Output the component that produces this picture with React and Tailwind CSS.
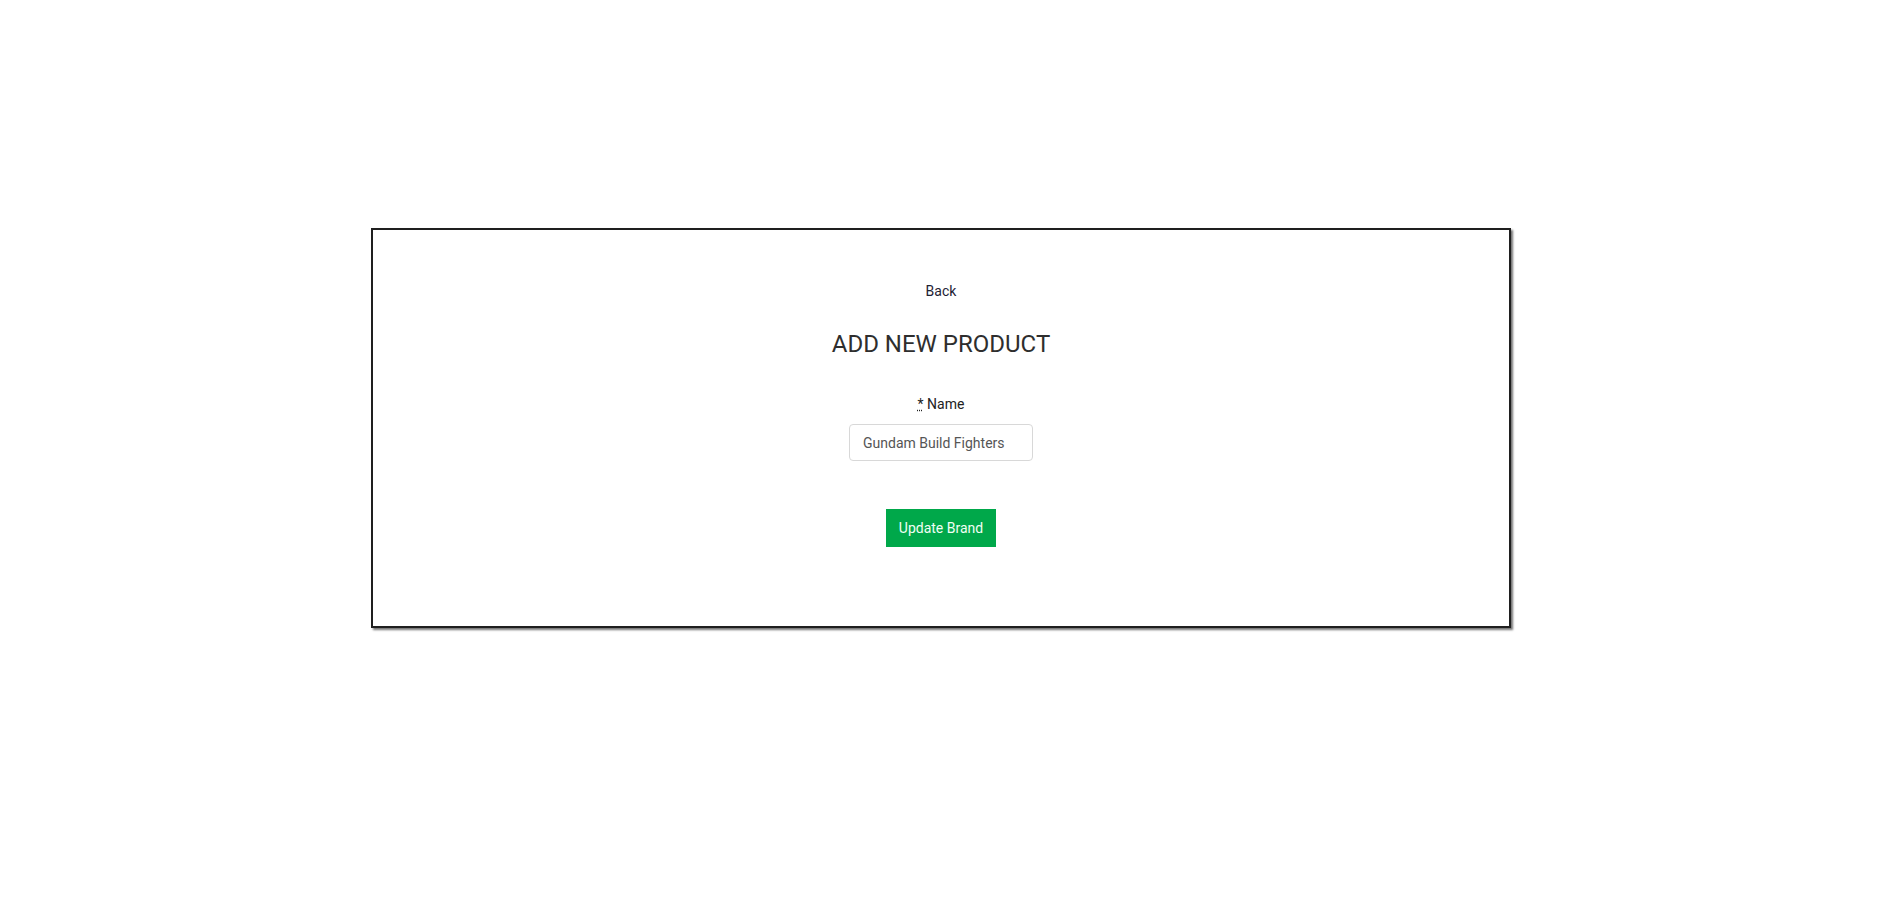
import React from 'react';

const font = { fontFamily: '"Liberation Sans Narrow", Roboto, sans-serif' };

const EditBrand = ({ name = 'Gundam Build Fighters' }) => {
  return (
    <div className="min-h-[910px] w-full bg-white pt-[228px] pl-[371px]" style={font}>
      <div className="w-[1140px] h-[400px] border-2 border-[#1f1f1f] shadow-[2px_2px_2px_rgba(0,0,0,0.55)] flex flex-col items-center pt-[50px]">
        <a href="#" className="text-[14px] leading-[22px] text-[#1e2235]">
          Back
        </a>

        <h1 className="mt-[25px] text-[24px] leading-[34px] text-[#2e2e2e]">
          ADD NEW PRODUCT
        </h1>

        <form className="mt-[32px] flex flex-col items-center">
          <label className="text-[14px] leading-[22px] text-[#222]">
            <abbr title="required" className="underline decoration-dotted">*</abbr> Name
          </label>
          <input
            type="text"
            defaultValue={name}
            className="mt-[9px] w-[184px] h-[37px] px-[13px] border border-[#d8d8d8] rounded-[4px] text-[14px] text-[#555] outline-none"
          />
          <button
            type="button"
            className="mt-[48px] w-[110px] h-[38px] bg-[#00a84a] text-[14px] text-[#f0fff4]"
          >
            Update Brand
          </button>
        </form>
      </div>
    </div>
  );
};

export default function App() {
  return <EditBrand />;
}
